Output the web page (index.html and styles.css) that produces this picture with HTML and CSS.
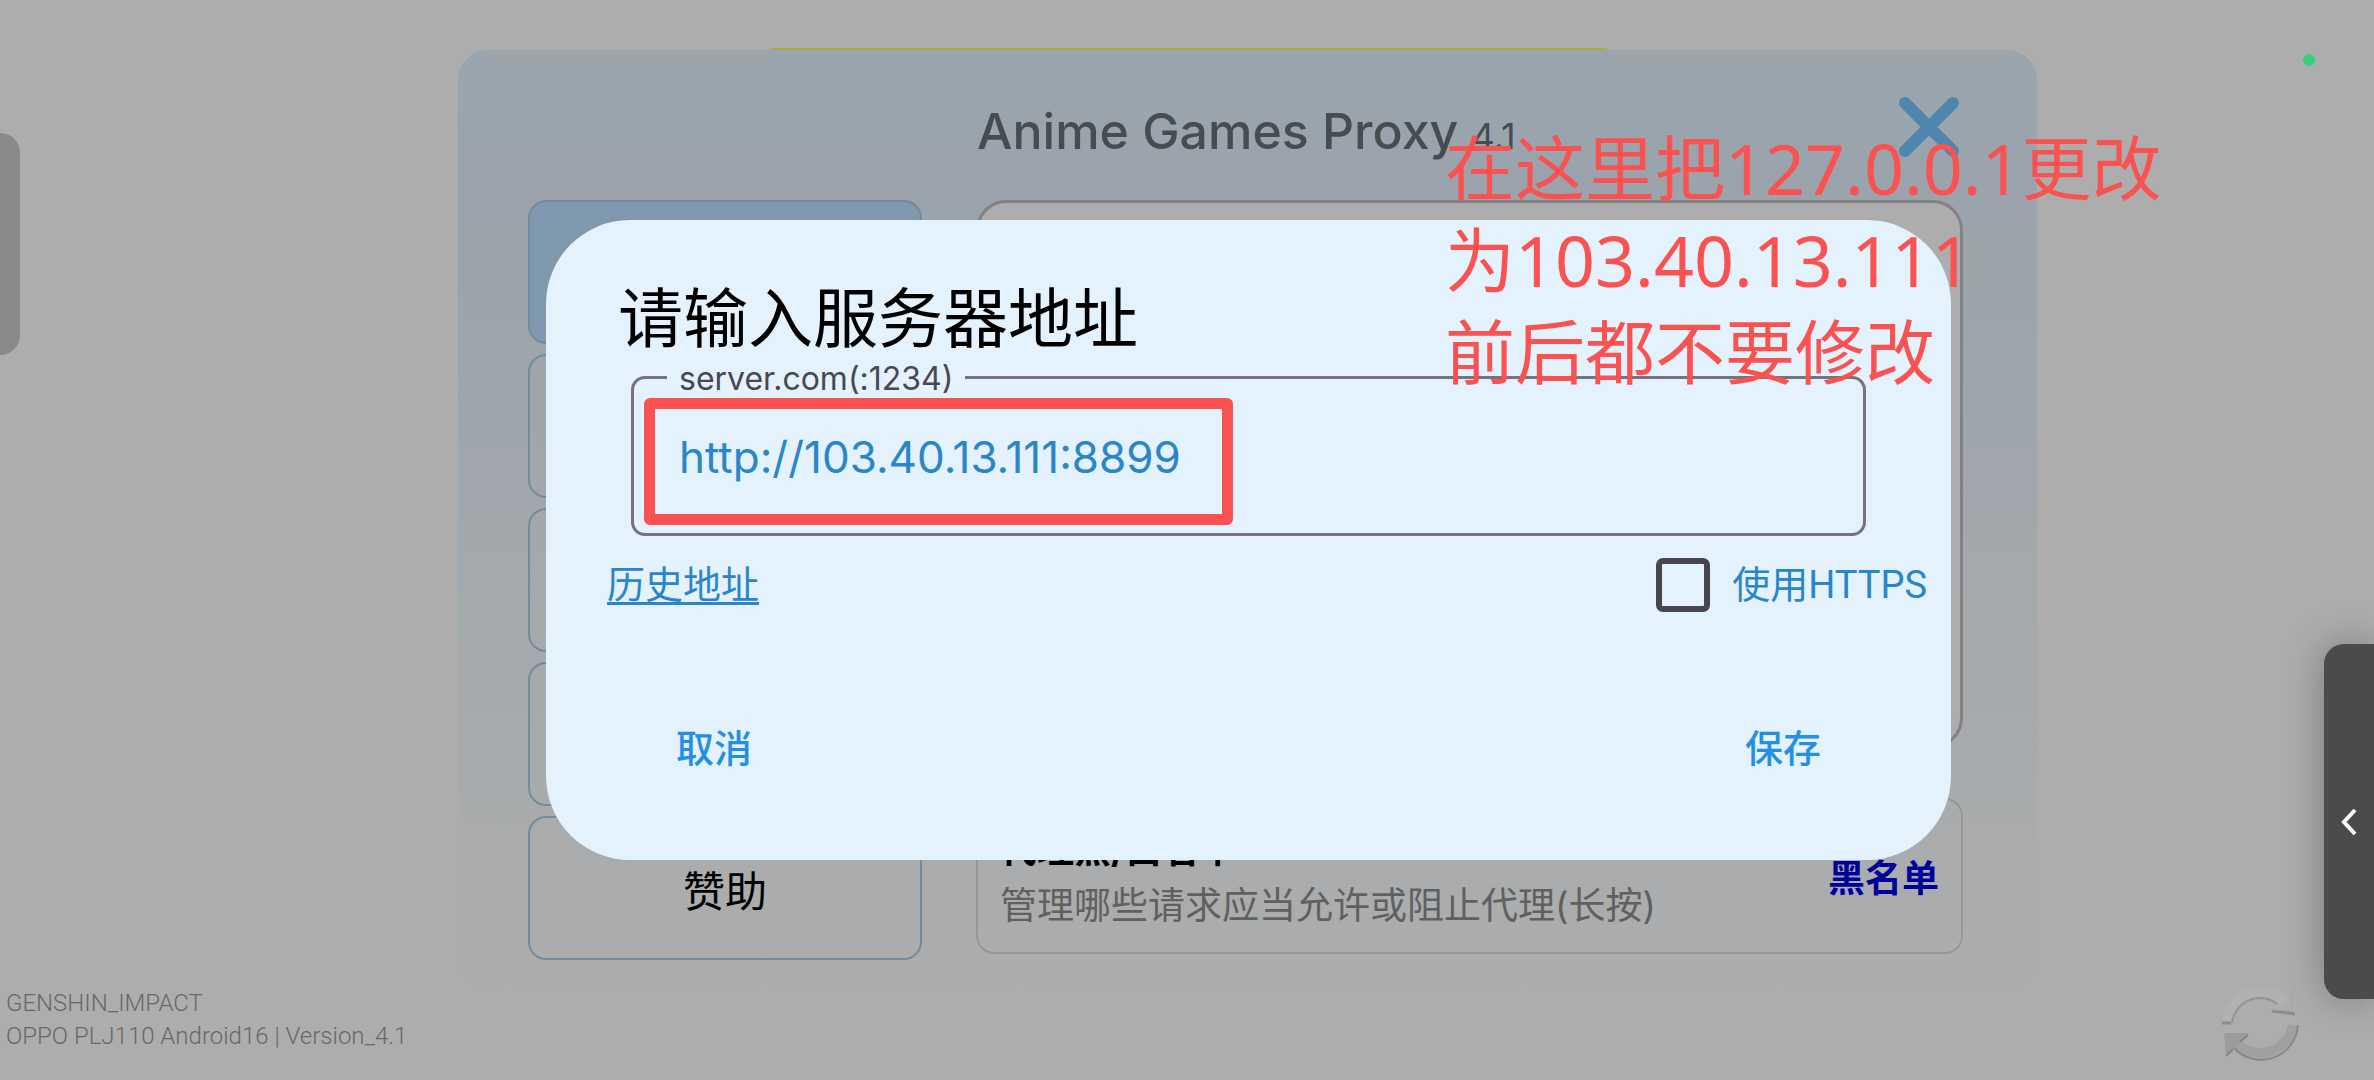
FILE: index.html
```html
<!DOCTYPE html>
<html lang="zh-CN">
<head>
    <meta charset="UTF-8">
    <meta name="viewport" content="width=device-width, initial-scale=1.0">
    <title>Anime Games Proxy</title>
    <link rel="stylesheet" href="styles.css">
</head>
<body>
    <div class="top-bar"></div>
    <main class="panel">
        <header class="panel-header">
            <h1>Anime Games Proxy <small>4.1</small></h1>
            <button class="close-button" type="button" aria-label="关闭">
                <svg viewBox="0 0 60 60" width="60" height="60">
                    <path d="M6 6L54 54M54 6L6 54" fill="none" stroke="#4e86ad" stroke-width="12" stroke-linecap="round"/>
                </svg>
            </button>
        </header>
        <div class="panel-body">
            <nav class="menu">
                <button class="menu-item active" type="button"></button>
                <button class="menu-item" type="button"></button>
                <button class="menu-item" type="button"></button>
                <button class="menu-item" type="button"></button>
                <button class="menu-item" type="button">赞助</button>
            </nav>
            <div class="content">
                <section class="content-box"></section>
                <section class="card">
                    <div class="card-text">
                        <h3>代理黑/白名单</h3>
                        <p>管理哪些请求应当允许或阻止代理(长按)</p>
                    </div>
                    <button class="list-button" type="button">黑名单</button>
                </section>
            </div>
        </div>
    </main>

    <footer class="device-info">
        <div>GENSHIN_IMPACT</div>
        <div>OPPO PLJ110 Android16 | Version_4.1</div>
    </footer>
    <svg class="refresh" viewBox="0 0 80 76" width="80" height="76">
        <path d="M7 33A33 33 0 0 1 64 13" fill="none" stroke="#b1b1b1" stroke-width="10"/>
        <path d="M12 34A28 28 0 0 1 57 15" fill="none" stroke="#949494" stroke-width="2"/>
        <path d="M2 34H11M52 22L75 25" fill="none" stroke="#8c8c8c" stroke-width="3"/>
        <path d="M72 6V22L54 21" fill="none" stroke="#a5a5a5" stroke-width="1"/>
        <path d="M15 52A33 33 0 0 0 73 36" fill="none" stroke="#a0a0a0" stroke-width="10"/>
        <path d="M14 59A37 37 0 0 0 78 36" fill="none" stroke="#888" stroke-width="2"/>
        <path d="M4 44H29L6 67Z" fill="#9c9c9c"/>
        <path d="M28 46L20 53M13 60L6 67" fill="none" stroke="#858585" stroke-width="2"/>
    </svg>

    <div class="side-tab-left"></div>
    <button class="side-tab-right" type="button" aria-label="展开">
        <svg viewBox="0 0 20 30" width="20" height="30">
            <path d="M16 3L5 15L16 27" fill="none" stroke="#fff" stroke-width="4"/>
        </svg>
    </button>
    <div class="camera-dot"></div>

    <div class="overlay">
        <form class="dialog">
            <h2>请输入服务器地址</h2>
            <fieldset class="field">
                <legend><label for="server">server.com(:1234)</label></legend>
                <input type="text" id="server" value="http://103.40.13.111:8899">
                <div class="highlight"></div>
            </fieldset>
            <div class="options">
                <a href="#">历史地址</a>
                <div class="https">
                    <input type="checkbox" id="https">
                    <label for="https">使用HTTPS</label>
                </div>
            </div>
            <div class="actions">
                <button type="button">取消</button>
                <button type="submit">保存</button>
            </div>
        </form>
    </div>

    <p class="note">在这里把127.0.0.1更改<br>为103.40.13.111<br>前后都不要修改</p>
</body>
</html>
```
FILE: styles.css
```css
* {
    box-sizing: border-box;
}
body {
    margin: 0;
    min-height: 100vh;
    padding: 50px 337px 0 458px;
    background-color: #adadad;
    font-family: Inter, "Noto Sans CJK SC", sans-serif;
    overflow: hidden;
}
h1, h2, h3, p {
    margin: 0;
    font-weight: 400;
}
button {
    padding: 0;
    border: none;
    background: none;
    font-family: inherit;
    cursor: pointer;
}

/* Main panel */
.top-bar {
    position: absolute;
    top: 48px;
    left: 764px;
    right: 761px;
    height: 20px;
    border-radius: 16px;
    background-color: #a8ad3c;
}
.panel {
    position: relative;
    padding: 0 74px 30px 70px;
    border-radius: 30px;
    background: linear-gradient(#9aa5ae, #9ba3ab 20%, #a4a9ac 60%, #adadad);
}
.panel-header {
    position: relative;
    display: flex;
    height: 150px;
    padding: 49px 0 0 449px;
}
h1 {
    font-size: 50px;
    line-height: 64px;
    font-weight: 500;
    color: #474c50;
    white-space: nowrap;
}
h1 small {
    font-size: 36px;
    font-weight: 400;
}
.close-button {
    position: absolute;
    top: 47px;
    right: 4px;
    height: 60px;
}
.panel-body {
    display: flex;
    gap: 54px;
}
.menu {
    flex: 0 0 394px;
    display: flex;
    flex-direction: column;
    gap: 10px;
}
.menu-item {
    height: 144px;
    border: 2px solid #728d99;
    border-radius: 18px;
    font-size: 42px;
    color: #000;
}
.menu-item.active {
    background-color: #7f98ae;
}
.content {
    flex: 1;
    display: flex;
    flex-direction: column;
    gap: 50px;
}
.content-box {
    height: 548px;
    border: 3px solid #828286;
    border-radius: 30px;
    background-color: #adadad;
}
.card {
    display: flex;
    align-items: center;
    justify-content: space-between;
    height: 156px;
    padding: 0 22px;
    border: 2px solid #979797;
    border-radius: 18px;
}
.card-text {
    padding-top: 4px;
    font-size: 37px;
    line-height: 56px;
    color: #606060;
}
.card-text h3 {
    font-size: 37px;
    font-weight: 700;
    color: #000;
}
.list-button {
    font-size: 37px;
    font-weight: 700;
    color: #00009b;
}

/* Screen edges */
.device-info {
    position: absolute;
    left: 6px;
    bottom: 27px;
    font-family: Roboto, sans-serif;
    font-size: 24px;
    line-height: 33px;
    font-weight: 300;
    color: #686868;
}
.refresh {
    position: absolute;
    right: 74px;
    bottom: 15px;
}
.side-tab-left {
    position: absolute;
    top: 133px;
    left: 0;
    width: 20px;
    height: 222px;
    border-radius: 0 20px 20px 0;
    background-color: #898989;
}
.side-tab-right {
    position: absolute;
    top: 644px;
    right: 0;
    width: 50px;
    height: 355px;
    border-radius: 20px 0 0 20px;
    background-color: #4b4b4b;
    box-shadow: 0 0 40px rgba(0, 0, 0, 0.3);
}
.side-tab-right svg {
    display: block;
    margin: 0 auto;
}
.camera-dot {
    position: absolute;
    top: 54px;
    right: 59px;
    width: 12px;
    height: 12px;
    border-radius: 50%;
    background-color: #35cf7d;
}

/* Server address dialog */
.overlay {
    position: absolute;
    inset: 0;
    display: flex;
    align-items: center;
    padding: 0 423px 0 546px;
}
.dialog {
    flex: 1;
    height: 640px;
    padding: 62px 24px 0 61px;
    border-radius: 84px;
    background-color: #e3f2fd;
    color: #2a86c8;
}
h2 {
    padding-left: 11px;
    font-size: 65px;
    line-height: 74px;
    color: #000;
}
.field {
    position: relative;
    height: 180px;
    margin: 0 61px 0 24px;
    padding: 0 45px;
    border: 3px solid #74737f;
    border-radius: 14px;
}
.field legend {
    margin-left: -12px;
    padding: 4px 12px 0;
    font-size: 32px;
    line-height: 38px;
    color: #49484f;
}
.field input {
    width: 100%;
    height: 118px;
    padding: 0;
    border: none;
    outline: none;
    background: none;
    font-family: inherit;
    font-size: 44px;
    color: #2a86c8;
}
.highlight {
    position: absolute;
    top: 0;
    left: 10px;
    width: 589px;
    height: 127px;
    border: 11px solid #fa5151;
    border-radius: 6px;
    pointer-events: none;
}
.options {
    display: flex;
    align-items: center;
    justify-content: space-between;
    margin-top: 20px;
    font-family: Roboto, "Noto Sans CJK SC", sans-serif;
    font-size: 38px;
    line-height: 58px;
}
.options a {
    color: inherit;
    text-underline-offset: 4px;
}
.https {
    display: flex;
    align-items: center;
    gap: 22px;
}
.https input {
    appearance: none;
    width: 54px;
    height: 54px;
    margin: 0;
    border: 6px solid #49454f;
    border-radius: 7px;
}
.actions {
    display: flex;
    justify-content: space-between;
    padding: 106px 106px 0 69px;
}
.actions button {
    font-size: 38px;
    line-height: 56px;
    font-weight: 500;
    color: #2490e4;
}

.note {
    position: absolute;
    top: 122px;
    left: 1445px;
    font-family: "Noto Sans", "Noto Sans CJK SC", sans-serif;
    font-size: 70px;
    line-height: 92px;
    color: #fa5151;
    white-space: nowrap;
}
```
